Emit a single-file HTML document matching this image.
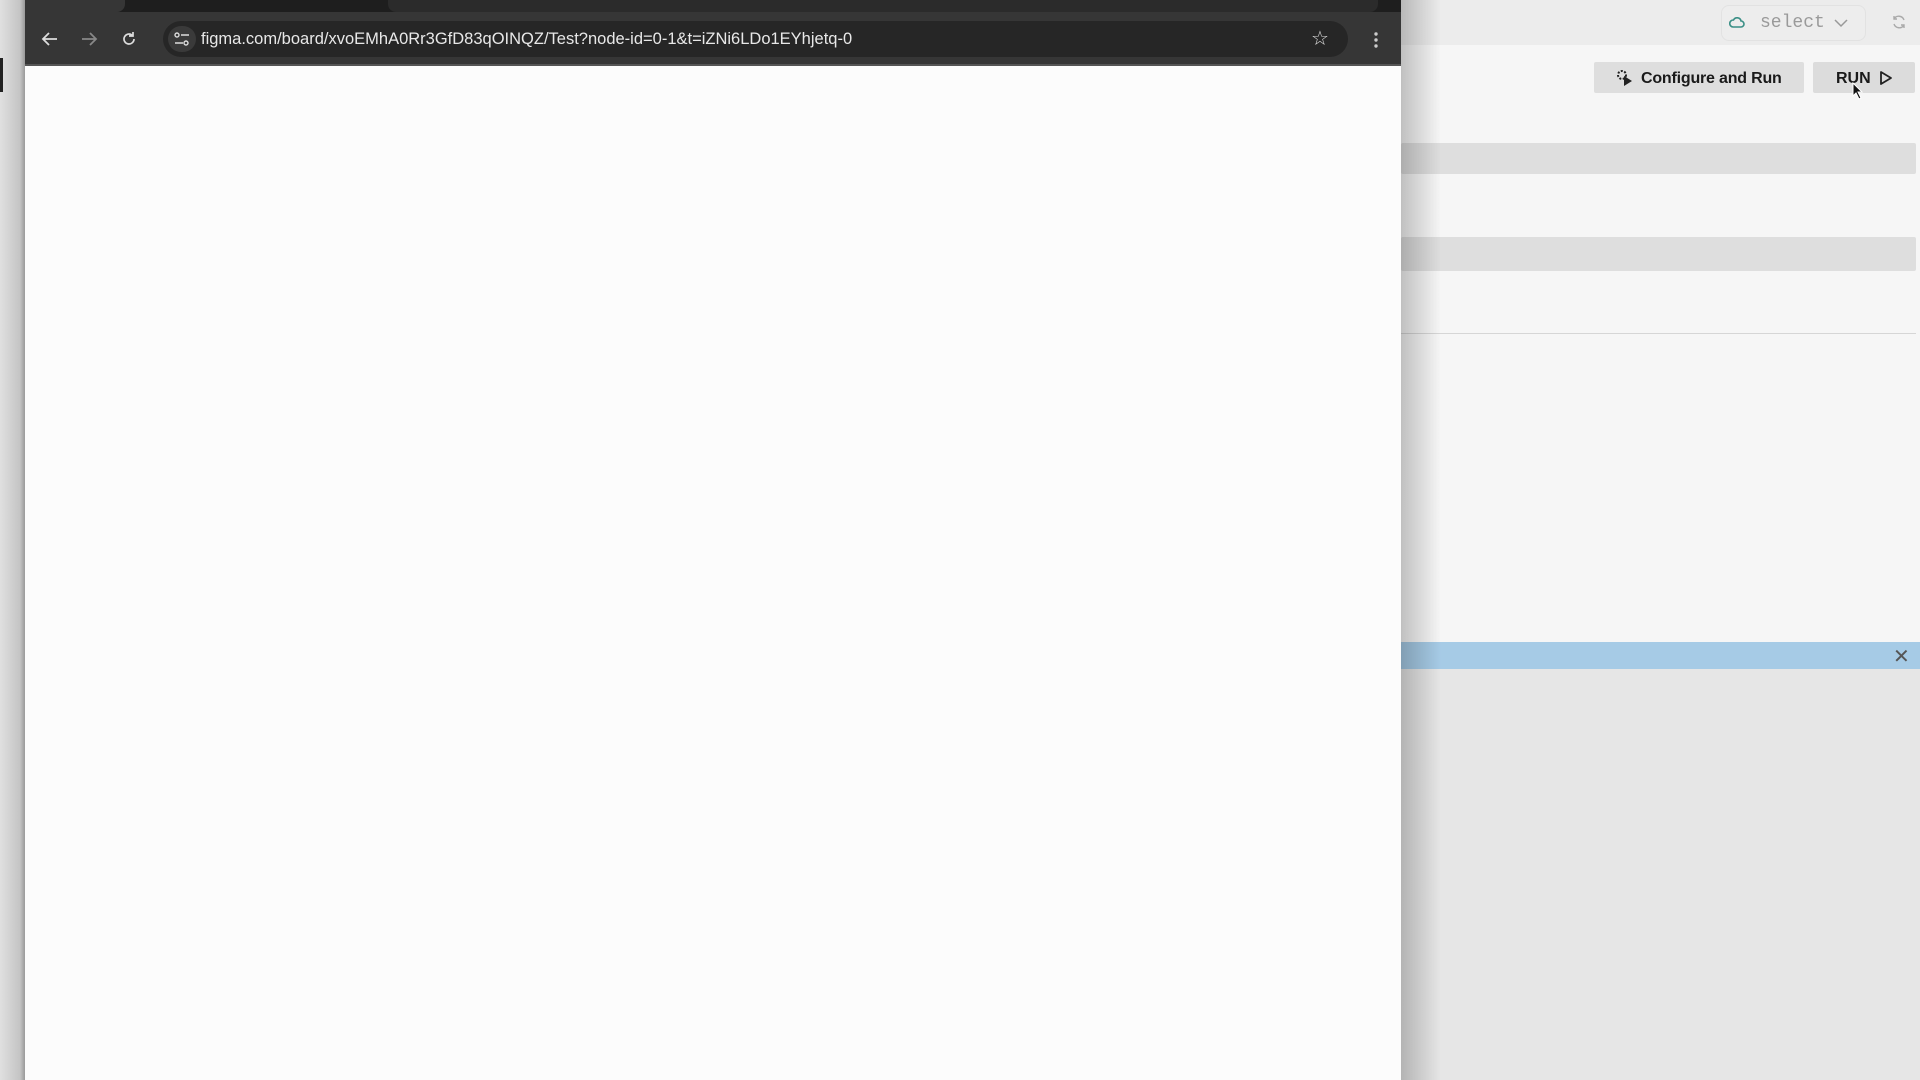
<!DOCTYPE html>
<html><head><style>
*{margin:0;padding:0;box-sizing:border-box}
body{width:1920px;height:1080px;overflow:hidden;background:#f5f5f5;position:relative;font-family:"Liberation Sans",sans-serif}
.abs{position:absolute}
</style></head><body>
<div class="abs" style="left:0;top:0;width:25px;height:1080px;background:linear-gradient(90deg,#e0e0e0,#c4c4c4 80%,#9a9a9a)"></div>
<div class="abs" style="left:0;top:58px;width:3px;height:34px;background:#222"></div>
<div class="abs" style="left:1401px;top:0;width:519px;height:45px;background:#ececec"></div>
<div class="abs" style="left:1401px;top:45px;width:519px;height:598px;background:#f6f6f6"></div>
<div class="abs" style="left:1721px;top:5px;width:145px;height:36px;border:1px solid #e2e2e2;border-radius:8px;background:#ededed"></div>
<svg class="abs" style="left:1729px;top:14px" width="16" height="16" viewBox="0 0 16 16"><path d="M4 13h8a3 3 0 0 0 0-6 4 4 0 0 0-7.5-1A3.5 3.5 0 0 0 4 13z" fill="none" stroke="#3a8f86" stroke-width="1.6"/></svg>
<div class="abs" style="left:1760px;top:13px;font:18px 'Liberation Mono',monospace;color:#9a9a9a">select</div>
<svg class="abs" style="left:1834px;top:18px" width="14" height="10"><path d="M1 2l6 6 6-6" fill="none" stroke="#999" stroke-width="1.5"/></svg>
<svg class="abs" style="left:1891px;top:14px" width="16" height="16" viewBox="0 0 16 16"><path d="M13 6A5.5 5.5 0 0 0 3 5M3 10a5.5 5.5 0 0 0 10 1M3 2v3h3M13 14v-3h-3" fill="none" stroke="#aaa" stroke-width="1.4"/></svg>
<div class="abs" style="left:1594px;top:62px;width:210px;height:31px;background:#dedede;border-radius:2px"></div>
<svg class="abs" style="left:1616px;top:69px" width="18" height="18" viewBox="0 0 18 18"><circle cx="6" cy="6" r="4" fill="none" stroke="#222" stroke-width="2" stroke-dasharray="2 1.5"/><path d="M8 7l8 5-8 5z" fill="#222"/></svg>
<div class="abs" style="left:1641px;top:70px;font:bold 16px 'Liberation Sans',sans-serif;color:#1a1a1a;letter-spacing:-0.2px">Configure and Run</div>
<div class="abs" style="left:1813px;top:62px;width:102px;height:31px;background:#dcdcdc;border-radius:2px"></div>
<div class="abs" style="left:1836px;top:70px;font:bold 16px 'Liberation Sans',sans-serif;color:#1a1a1a">RUN</div>
<svg class="abs" style="left:1879px;top:70px" width="14" height="16"><path d="M2 2l10 6-10 6z" fill="none" stroke="#222" stroke-width="1.8" stroke-linejoin="round"/></svg>
<svg class="abs" style="left:1852px;top:82px" width="12" height="18"><path d="M1 1v13l3-3 3 6 2-1-3-6h4z" fill="#111" stroke="#fff" stroke-width="1"/></svg>
<div class="abs" style="left:1401px;top:143px;width:515px;height:31px;background:#dedede;border-radius:2px"></div>
<div class="abs" style="left:1401px;top:237px;width:515px;height:34px;background:#dedede;border-radius:2px"></div>
<div class="abs" style="left:1401px;top:333px;width:515px;height:1px;background:#d6d6d6"></div>
<div class="abs" style="left:1401px;top:642px;width:519px;height:27px;background:#a6cbe6"></div>
<div class="abs" style="left:1893px;top:644px;font:20px 'DejaVu Sans',sans-serif;color:#555">✕</div>
<div class="abs" style="left:1401px;top:669px;width:519px;height:411px;background:#e6e6e6"></div>
<div class="abs" style="left:1401px;top:0;width:40px;height:1080px;background:linear-gradient(90deg,rgba(0,0,0,.22),rgba(0,0,0,0))"></div>
<div class="abs" style="left:25px;top:0;width:1376px;height:1080px;background:#fcfcfc"></div>
<div class="abs" style="left:25px;top:0;width:1376px;height:14px;background:#1e1e1e"></div>
<div class="abs" style="left:25px;top:0;width:100px;height:12px;background:#363636;border-radius:0 0 8px 0"></div>
<div class="abs" style="left:388px;top:0;width:990px;height:12px;background:#2b2b2b;border-radius:0 0 8px 8px"></div>
<div class="abs" style="left:25px;top:12px;width:1376px;height:53px;background:#363636"></div>
<div class="abs" style="left:25px;top:64px;width:1376px;height:2px;background:#555"></div>
<div class="abs" style="left:163px;top:21px;width:1185px;height:36px;background:#262626;border-radius:18px"></div>
<svg class="abs" style="left:41px;top:31px" width="18" height="16"><path d="M16 8H3M8 2L2 8l6 6" fill="none" stroke="#ddd" stroke-width="1.8"/></svg>
<svg class="abs" style="left:80px;top:31px" width="18" height="16"><path d="M2 8h13M10 2l6 6-6 6" fill="none" stroke="#888" stroke-width="1.8"/></svg>
<svg class="abs" style="left:121px;top:31px" width="16" height="16" viewBox="0 0 16 16"><path d="M13 8a5 5 0 1 1-2-4M12 1v4H8" fill="none" stroke="#ddd" stroke-width="1.7"/></svg>
<div class="abs" style="left:168px;top:26px;width:28px;height:26px;background:#3a3a3a;border-radius:13px"></div>
<svg class="abs" style="left:173px;top:31px" width="18" height="16"><circle cx="4" cy="4" r="2" fill="none" stroke="#ddd" stroke-width="1.4"/><path d="M8 4h8M2 12h8" stroke="#ddd" stroke-width="1.4"/><circle cx="13" cy="12" r="2" fill="none" stroke="#ddd" stroke-width="1.4"/></svg>
<div class="abs" style="left:201px;top:30px;font:16.5px 'Liberation Sans',sans-serif;color:#e8e8e8">figma.com/board/xvoEMhA0Rr3GfD83qOINQZ/Test?node-id=0-1&amp;t=iZNi6LDo1EYhjetq-0</div>
<div class="abs" style="left:1311px;top:26px;font:20px 'DejaVu Sans',sans-serif;color:#ddd">☆</div>
<svg class="abs" style="left:1373px;top:31px" width="6" height="18"><circle cx="3" cy="3" r="1.7" fill="#ccc"/><circle cx="3" cy="9" r="1.7" fill="#ccc"/><circle cx="3" cy="15" r="1.7" fill="#ccc"/></svg>
</body></html>
